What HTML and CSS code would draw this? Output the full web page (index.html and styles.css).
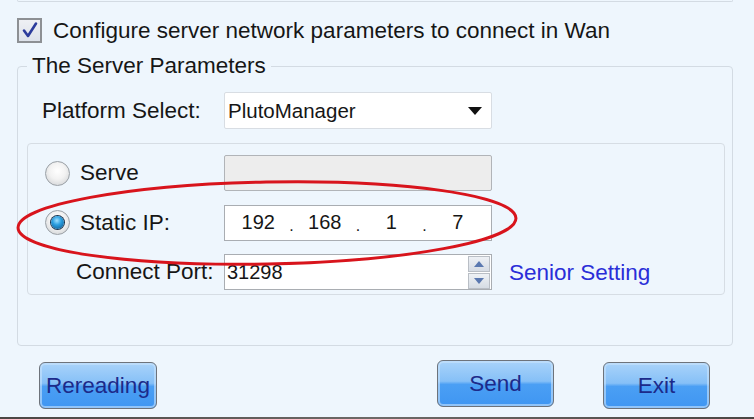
FILE: index.html
```html
<!DOCTYPE html>
<html lang="en">
<head>
    <meta charset="UTF-8">
    <title>Server Parameters</title>
    <link rel="stylesheet" href="styles.css">
</head>
<body>
    <div class="panel-top"></div>

    <div class="wan-row">
        <span class="checkbox">
            <svg width="21" height="21" viewBox="0 0 21 21"><path d="M5 10.5 L9 16 L17 3.5" fill="none" stroke="#2c3c9c" stroke-width="2.6" stroke-linecap="round" stroke-linejoin="round"/></svg>
        </span>
        <span class="wan-text">Configure server network parameters to connect in Wan</span>
    </div>

    <fieldset class="server">
        <legend>The Server Parameters</legend>

        <div class="platform-row">
            <label class="platform-label">Platform Select:</label>
            <div class="select">
                <span>PlutoManager</span>
                <span class="arrow"></span>
            </div>
        </div>

        <div class="address-box">
            <span class="radio"></span>
            <span class="row-label">Serve</span>
            <div class="field disabled"></div>
            <span></span>

            <span class="radio checked"></span>
            <span class="row-label">Static IP:</span>
            <div class="field ip">
                <span class="octet">192</span><span class="dot">.</span>
                <span class="octet">168</span><span class="dot">.</span>
                <span class="octet">1</span><span class="dot">.</span>
                <span class="octet">7</span>
            </div>
            <span></span>

            <span class="port-label">Connect Port:</span>
            <div class="field port">
                <span class="port-value">31298</span>
                <span class="spinner">
                    <span class="spin up"></span>
                    <span class="spin down"></span>
                </span>
            </div>
            <span class="senior">Senior Setting</span>
        </div>
    </fieldset>

    <div class="buttons">
        <button class="btn reread">Rereading</button>
        <button class="btn send">Send</button>
        <button class="btn exit">Exit</button>
    </div>

    <div class="window-edge"></div>

    <svg class="mark" width="754" height="419" viewBox="0 0 754 419">
        <ellipse cx="267" cy="223" rx="249" ry="41" fill="none" stroke="#d8141c" stroke-width="3" transform="rotate(-1.1 267 223)"/>
    </svg>
</body>
</html>
```

FILE: styles.css
```css
body {
    margin: 0;
    width: 754px;
    height: 419px;
    overflow: hidden;
    position: relative;
    background-color: #eef6fd;
    color: #161616;
    font-family: 'Liberation Sans', Arial, sans-serif;
    font-size: 22.5px;
}

.panel-top {
    height: 1px;
    margin: 0 21px 0 17px;
    border: 1px solid #d3dbe3;
    border-top: none;
    border-radius: 0 0 4px 4px;
}

.wan-row {
    display: flex;
    align-items: center;
    margin: 16px 0 0 17px;
    height: 25px;
}

.checkbox {
    width: 21px;
    height: 21px;
    border: 2px solid #8d9094;
    background: linear-gradient(#eef0f4, #dde2ea);
    display: flex;
}

.wan-text {
    margin-left: 11px;
}

.server {
    margin: 10px 21px 0 17px;
    padding: 0 7px 50px 9px;
    border: 1px solid #d3dbe3;
    border-radius: 4px;
}

.server legend {
    padding: 0 5px;
    line-height: 26px;
}

.platform-row {
    display: flex;
    align-items: center;
    margin-top: 13px;
    padding-left: 15px;
}

.platform-label {
    width: 182px;
}

.select {
    border: 1px solid #d8dde3;
    border-radius: 2px;
    background: #fff;
    display: flex;
    align-items: center;
    justify-content: space-between;
    padding: 0 9px 0 3px;
    box-sizing: border-box;
    width: 268px;
    height: 37px;
    font-size: 20.5px;
}

.arrow {
    width: 0;
    height: 0;
    border-left: 7px solid transparent;
    border-right: 7px solid transparent;
    border-top: 8px solid #111;
}

.address-box {
    margin-top: 14px;
    border: 1px solid #d6dde4;
    border-radius: 4px;
    padding: 11px 0 4px 17px;
    display: grid;
    grid-template-columns: 25px 134px 268px 1fr;
    grid-template-rows: 36px 36px 36px;
    column-gap: 10px;
    row-gap: 13.5px;
    align-items: center;
}

.address-box .field {
    grid-column: 3;
}

.radio {
    width: 23px;
    height: 23px;
    border-radius: 50%;
    border: 1px solid #9aa0a6;
    background: radial-gradient(circle at 50% 40%, #ffffff 0%, #f2f2f2 45%, #c9cccf 100%);
    display: flex;
    align-items: center;
    justify-content: center;
}

.radio.checked::after {
    content: "";
    width: 13px;
    height: 13px;
    border-radius: 50%;
    background: radial-gradient(circle at 45% 35%, #9ee0ff 0%, #2a9ee0 40%, #0b4f82 100%);
    box-shadow: 0 0 0 1px #1a3550;
}

.port-label {
    grid-column: 1 / span 2;
    padding-left: 31px;
}

.field {
    height: 36px;
    box-sizing: border-box;
    border: 1px solid #a9adb2;
    background: #fff;
    font-size: 20px;
}

.field.disabled {
    background: #ededed;
    border-color: #b1b4b8;
    border-radius: 2px;
}

.ip {
    display: flex;
    align-items: center;
}

.octet {
    flex: 1;
    text-align: center;
}

.dot {
    width: 0;
    display: flex;
    justify-content: center;
    font-size: 16px;
    padding-top: 6px;
}

.port {
    display: flex;
    align-items: center;
    justify-content: space-between;
    padding: 0 1px 0 2px;
}

.spinner {
    display: flex;
    flex-direction: column;
    gap: 1px;
    width: 22px;
    height: 33px;
}

.spin {
    flex: 1;
    background: linear-gradient(#eef1f5, #d6dce4);
    border: 1px solid #b9bec5;
    display: flex;
    align-items: center;
    justify-content: center;
}

.spin.up::after {
    content: "";
    border-left: 5px solid transparent;
    border-right: 5px solid transparent;
    border-bottom: 6px solid #5a78b0;
}

.spin.down::after {
    content: "";
    border-left: 5px solid transparent;
    border-right: 5px solid transparent;
    border-top: 6px solid #5a78b0;
}

.senior {
    color: #2a2ed8;
    margin-left: 7px;
    margin-top: 2px;
}

.buttons {
    display: flex;
    align-items: flex-start;
    margin: 16px 0 0 39px;
    padding-right: 44px;
}

.btn {
    height: 47px;
    border: 1.5px solid #6d737b;
    border-radius: 6px;
    background: linear-gradient(#a9d3fa 0%, #86c0f7 45%, #4b9ff4 52%, #3f96f2 100%);
    box-shadow: inset 0 0 0 2px rgba(200, 226, 252, 0.6);
    color: #1c2a8a;
    font-family: 'Liberation Sans', Arial, sans-serif;
    font-size: 22.5px;
    padding: 0;
}

.reread {
    width: 118px;
}

.send {
    width: 117px;
    margin-left: auto;
    margin-top: -2px;
}

.exit {
    width: 107px;
    margin-left: 49px;
}

.window-edge {
    position: absolute;
    left: 0;
    right: 0;
    bottom: 0;
    height: 2px;
    background: linear-gradient(90deg, #4a4644, #6d6a68 50%, #4a4644);
}

.mark {
    position: absolute;
    left: 0;
    top: 0;
    pointer-events: none;
}
```
